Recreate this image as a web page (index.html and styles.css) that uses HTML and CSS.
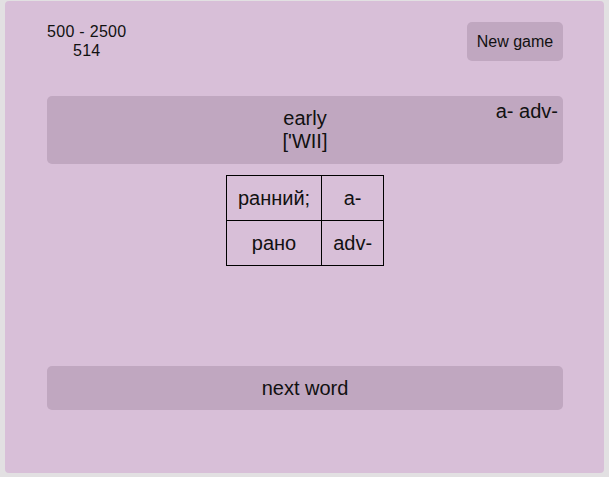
FILE: index.html
```html
<!DOCTYPE html>
<html>
<head>
<meta charset="utf-8">
<link rel="stylesheet" href="styles.css">
</head>
<body>
<div class="card">
  <div class="header">
    <div class="stats">
      <div>500 - 2500</div>
      <div>514</div>
    </div>
    <button class="btn new-game">New game</button>
  </div>
  <div class="word-box">
    <div class="word">early</div>
    <div class="transcription">['WII]</div>
    <div class="pos">a- adv-</div>
  </div>
  <table class="translations">
    <tr><td>ранний;</td><td>a-</td></tr>
    <tr><td>рано</td><td>adv-</td></tr>
  </table>
  <button class="btn next-word">next word</button>
</div>
</body>
</html>
```
FILE: styles.css
```css
html, body {
  margin: 0;
  padding: 0;
}
body {
  background: #e2e0e2;
  font-family: "Liberation Sans", Arial, sans-serif;
  color: #111;
  padding: 1px 5px 0 5px;
}
.card {
  background: #d8bfd8;
  height: 472px;
  border-radius: 4px;
  padding: 21px 41px 0 42px;
  box-sizing: border-box;
  display: flex;
  flex-direction: column;
}
.header {
  display: flex;
  justify-content: space-between;
  align-items: flex-start;
}
.stats {
  font-size: 16px;
  line-height: 19px;
  text-align: center;
  letter-spacing: 0.3px;
}
.btn {
  font-family: "Liberation Sans", Arial, sans-serif;
  background: #c0a7c0;
  border: none;
  border-radius: 5px;
  color: #111;
  padding: 0;
  margin: 0;
}
.new-game {
  font-size: 16px;
  width: 96px;
  height: 39px;
  line-height: 39px;
}
.word-box {
  position: relative;
  margin-top: 35px;
  background: #c0a7c0;
  border-radius: 5px;
  height: 68px;
  box-sizing: border-box;
  padding-top: 11px;
  text-align: center;
  font-size: 20px;
  line-height: 23px;
}
.pos {
  position: absolute;
  top: 4px;
  right: 5px;
}
.translations {
  margin: 11px auto 0 auto;
  border-collapse: collapse;
  font-size: 20px;
}
.translations td {
  border: 1px solid #000;
  padding: 10.5px 11px;
  line-height: 23px;
  text-align: center;
}
.next-word {
  margin-top: 100px;
  height: 44px;
  font-size: 20px;
  width: 100%;
}
```
